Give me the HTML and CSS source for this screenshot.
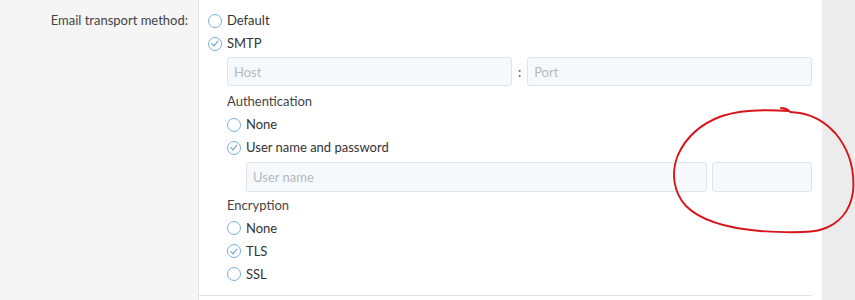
FILE: index.html
```html
<!DOCTYPE html>
<html lang="en">
<head>
  <meta charset="UTF-8">
  <title>Email options</title>
  <link rel="stylesheet" href="styles.css">
</head>
<body>
  <div class="page">
    <div class="form-row">
      <div class="form-label">Email transport method:</div>
      <div class="form-field">
        <label class="choice"><span class="radio"></span>Default</label>
        <label class="choice"><span class="radio checked"></span>SMTP</label>

        <div class="sub">
          <div class="input-pair">
            <input class="input" placeholder="Host">
            <span class="sep">:</span>
            <input class="input" placeholder="Port">
          </div>

          <div class="group-title">Authentication</div>
          <label class="choice"><span class="radio"></span>None</label>
          <label class="choice"><span class="radio checked"></span>User name and password</label>
          <div class="input-pair login">
            <input class="input user" placeholder="User name">
            <input class="input pass" type="password">
          </div>

          <div class="group-title">Encryption</div>
          <label class="choice"><span class="radio"></span>None</label>
          <label class="choice"><span class="radio checked"></span>TLS</label>
          <label class="choice"><span class="radio"></span>SSL</label>
        </div>
        <div class="form-end"></div>
      </div>
    </div>
    <div class="gutter"></div>
  </div>

  <!-- hand drawn marker round the password box -->
  <svg class="scribble" width="855" height="300" viewBox="0 0 855 300">
    <path d="M 781 108 C 785 108 788 110 789 111 C 760 109 740 110 722 116 C 700 124 686 137 678 155 C 671 172 673 192 686 206 C 700 220 725 228 760 231 C 790 233 812 233 823 229 C 838 224 850 212 853 192 C 855 170 849 150 836 134 C 825 122 815 116 800 113 L 790 112"/>
  </svg>
</body>
</html>
```

FILE: styles.css
```css
* {
  box-sizing: border-box;
}

body {
  margin: 0;
  font-family: Lato, "Open Sans", sans-serif;
  font-size: 13px;
  color: #333;
  background: #fff;
}

.page {
  display: flex;
  height: 300px;
  overflow: hidden;
}

.form-row {
  display: flex;
  width: 822px;
  flex: none;
}

.form-label {
  width: 199px;
  flex: none;
  padding: 9px 10px 0 0;
  line-height: 23px;
  text-align: right;
  color: #444;
  background: #f5f5f5;
  border-right: 1px solid #e3e3e3;
}

.form-field {
  flex: 1;
  min-width: 0;
  padding: 9px 10px 0 9px;
}

.gutter {
  flex: 1;
  background: #ececec;
}

.choice {
  display: flex;
  align-items: center;
  gap: 5px;
  height: 23px;
  line-height: 23px;
}

.radio {
  position: relative;
  width: 14px;
  height: 14px;
  border: 1.5px solid #79b0dd;
  border-radius: 50%;
  flex: none;
}

.radio.checked::after {
  content: "";
  position: absolute;
  left: 3.8px;
  top: 1.8px;
  width: 3px;
  height: 5.5px;
  border: solid #5f9bd0;
  border-width: 0 1.5px 1.5px 0;
  transform: rotate(40deg);
}

.sub {
  padding-left: 19px;
}

.input-pair {
  display: flex;
  align-items: center;
  gap: 6px;
  margin: 2px 0 4px;
}

.input {
  flex: 1 1 0;
  width: 0;
  min-width: 0;
  height: 29px;
  padding: 0 6px;
  font: inherit;
  color: #333;
  background: #f6f9fb;
  border: 1px solid #dfe4e8;
  border-radius: 3px;
  outline: none;
}

.input::placeholder {
  color: #b4b9bd;
}

.sep {
  color: #444;
}

.login {
  margin-left: 19px;
  gap: 5px;
  margin-top: 2.5px;
  margin-bottom: 2px;
  height: 30px;
}

.login .input {
  height: 30px;
}

.login .user {
  flex: none;
  width: 461px;
}

.group-title {
  line-height: 23px;
  color: #444;
}

.form-end {
  margin-top: 9.5px;
  border-bottom: 1px solid #e3e3e3;
  margin-left: -9px;
}

.scribble {
  position: absolute;
  top: 0;
  left: 0;
  pointer-events: none;
}

.scribble path {
  fill: none;
  stroke: #d8151c;
  stroke-width: 1.9;
  stroke-linecap: round;
  stroke-linejoin: round;
}
```
